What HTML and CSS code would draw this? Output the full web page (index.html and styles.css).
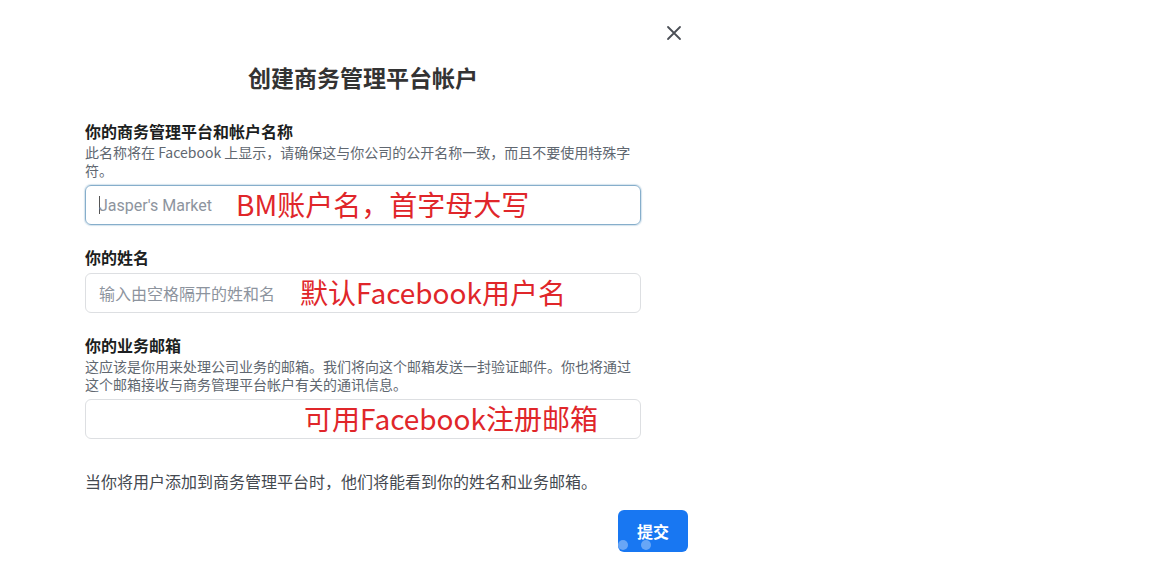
FILE: index.html
```html
<!DOCTYPE html>
<html lang="zh-CN">
<head>
<meta charset="utf-8">
<title>创建商务管理平台帐户</title>
<link rel="stylesheet" href="styles.css">
</head>
<body>
<div class="dialog">
  <button class="close" aria-label="关闭">
    <svg width="16" height="16" viewBox="0 0 16 16"><path d="M2 2 L14 14 M14 2 L2 14" stroke="#4b4f56" stroke-width="1.8" stroke-linecap="round" fill="none"/></svg>
  </button>
  <div class="form">
    <h1 class="title">创建商务管理平台帐户</h1>

    <div class="field first">
      <div class="label">你的商务管理平台和帐户名称</div>
      <div class="desc">此名称将在 Facebook 上显示，请确保这与你公司的公开名称一致，而且不要使用特殊字符。</div>
      <div class="box focused">
        <span class="caret"></span><span class="ph latin">Jasper's Market</span>
        <span class="anno a1">BM账户名，首字母大写</span>
      </div>
    </div>

    <div class="field">
      <div class="label">你的姓名</div>
      <div class="box">
        <span class="ph">输入由空格隔开的姓和名</span>
        <span class="anno a2">默认Facebook用户名</span>
      </div>
    </div>

    <div class="field">
      <div class="label">你的业务邮箱</div>
      <div class="desc">这应该是你用来处理公司业务的邮箱。我们将向这个邮箱发送一封验证邮件。你也将通过这个邮箱接收与商务管理平台帐户有关的通讯信息。</div>
      <div class="box">
        <span class="anno a3">可用Facebook注册邮箱</span>
      </div>
    </div>

    <p class="note">当你将用户添加到商务管理平台时，他们将能看到你的姓名和业务邮箱。</p>
  </div>
  <div class="actions">
    <button class="submit">提交<span class="dot d1"></span><span class="dot d2"></span></button>
  </div>
</div>
</body>
</html>
```

FILE: styles.css
```css
* { box-sizing: border-box; }
html, body { margin: 0; padding: 0; background: #ffffff; }
body {
  font-family: "Noto Sans CJK SC", "Noto Sans", sans-serif;
  color: #1c1e21;
}
.dialog {
  position: relative;
  width: 603px;
  margin-left: 85px;
  padding-top: 63px;
}
.close {
  position: absolute;
  top: 25px;
  right: 6px;
  width: 16px;
  height: 16px;
  padding: 0;
  border: 0;
  background: none;
  display: flex;
}
.form { width: 556px; }
.title {
  margin: 0;
  text-align: center;
  font-size: 23px;
  line-height: 28px;
  font-weight: 700;
  color: #333333;
}
.field { margin-top: 22px; }
.field.first { margin-top: 30px; }
.label {
  font-size: 16px;
  line-height: 20px;
  font-weight: 700;
  color: #1c1e21;
}
.desc {
  margin-top: 2px;
  font-size: 14px;
  line-height: 18px;
  color: #606770;
}
.box {
  position: relative;
  margin-top: 6px;
  height: 40px;
  border: 1px solid #dddfe2;
  border-radius: 6px;
  display: flex;
  align-items: center;
  padding-left: 13px;
}
.box.focused {
  border: 1.5px solid #86aecb;
  box-shadow: 0 0 1px 1px rgba(134, 174, 203, 0.35);
}
.ph {
  font-size: 16px;
  color: #8d949e;
}
.ph.latin {
  font-family: Roboto, "Liberation Sans", "Noto Sans CJK SC", sans-serif;
  font-size: 16px;
  color: #8d949e;
}
.caret {
  width: 1px;
  height: 18px;
  background: #555;
  margin-right: -1px;
}
.anno {
  position: absolute;
  top: 50%;
  transform: translateY(-52%);
  font-size: 28px;
  line-height: 36px;
  color: #e0262a;
  white-space: nowrap;
  font-weight: 400;
}
.a1 { left: 150px; }
.a2 { left: 214px; }
.a3 { left: 218px; }
.note {
  margin: 31px 0 0;
  font-size: 16px;
  line-height: 22px;
  color: #444950;
}
.actions {
  display: flex;
  justify-content: flex-end;
  margin-top: 18px;
}
.submit {
  position: relative;
  width: 70px;
  height: 42px;
  border: 0;
  border-radius: 6px;
  background: #1877f2;
  color: #ffffff;
  font-family: "Noto Sans CJK SC", sans-serif;
  font-size: 16px;
  font-weight: 700;
  padding: 0;
  overflow: hidden;
}
.dot {
  position: absolute;
  bottom: 2px;
  width: 10px;
  height: 10px;
  border-radius: 50%;
  background: rgba(255, 255, 255, 0.35);
}
.d1 { left: 0px; }
.d2 { left: 23px; }
```
